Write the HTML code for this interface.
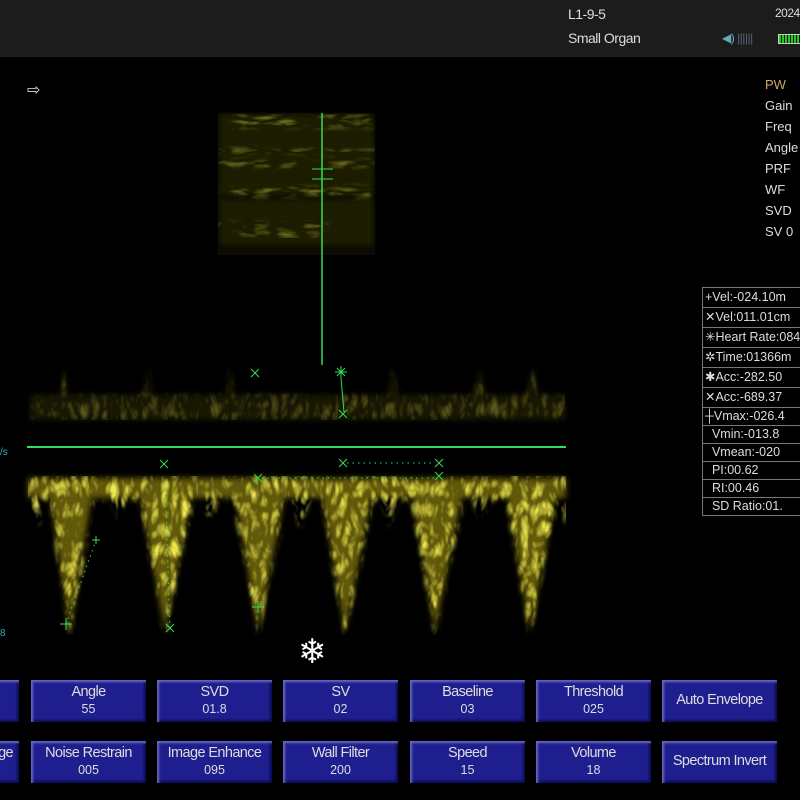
<!DOCTYPE html>
<html><head><meta charset="utf-8"><style>
body{margin:0;width:800px;height:800px;background:#000;overflow:hidden;position:relative;font-family:"Liberation Sans",sans-serif;}
.top{position:absolute;left:0;top:0;width:800px;height:57px;background:#1c1c1c;}
.t{position:absolute;color:#ddd;font-size:14px;white-space:nowrap;letter-spacing:-0.5px}
.r{position:absolute;left:765px;color:#ddd;font-size:13px;}
.mb{position:absolute;left:702px;width:110px;border:1px solid #777;color:#ddd;font-size:12.5px;}
.mb div{height:19px;line-height:19px;border-bottom:1px solid #777;padding-left:2px;white-space:nowrap;overflow:hidden;}
.mb div:last-child{border-bottom:none}
.b{position:absolute;width:115px;height:42px;background:#1e1e8e;box-shadow:inset 2px 2px 2px #6a6ac0,inset -2px -2px 2px #0c0c50;color:#ddd;text-align:center;font-size:14.5px;line-height:17px;box-sizing:border-box;padding-top:4px;letter-spacing:-0.6px;white-space:nowrap}
.b small{font-size:12.5px;display:block;letter-spacing:0}
.b.one{padding-top:12px}
</style></head><body>
<div class="top"></div>
<div class="t" style="left:568px;top:6px">L1-9-5</div>
<div class="t" style="left:568px;top:30px">Small Organ</div>
<div class="t" style="left:775px;top:6px;font-size:12px">2024</div>
<div class="t" style="left:722px;top:31px;color:#6ab;font-size:12px">◀) <span style="color:#567">||||||</span></div>
<div style="position:absolute;left:778px;top:34px;width:24px;height:8px;border:1px solid #ccc;background:repeating-linear-gradient(90deg,#2c2 0 2px,#111 2px 3px)"></div>
<div class="t" style="left:27px;top:80px;font-size:16px">⇨</div>
<div class="r" style="top:77px;color:#c9a86a">PW</div>
<div class="r" style="top:98px">Gain</div>
<div class="r" style="top:119px">Freq</div>
<div class="r" style="top:140px">Angle</div>
<div class="r" style="top:161px">PRF</div>
<div class="r" style="top:182px">WF</div>
<div class="r" style="top:203px">SVD</div>
<div class="r" style="top:224px">SV 0</div>
<div class="mb" style="top:287px">
<div>+Vel:-024.10m</div><div>✕Vel:011.01cm</div><div>✳Heart Rate:084</div><div>✲Time:01366m</div><div>✱Acc:-282.50</div><div>✕Acc:-689.37</div>
</div>
<div class="mb" style="top:407px">
<div style="height:17px;line-height:17px">┼Vmax:-026.4</div><div style="height:17px;line-height:17px">&nbsp;&nbsp;Vmin:-013.8</div><div style="height:17px;line-height:17px">&nbsp;&nbsp;Vmean:-020</div><div style="height:17px;line-height:17px">&nbsp;&nbsp;PI:00.62</div><div style="height:17px;line-height:17px">&nbsp;&nbsp;RI:00.46</div><div style="height:17px;line-height:17px">&nbsp;&nbsp;SD Ratio:01.</div>
</div>
<svg width="800" height="800" style="position:absolute;left:0;top:0">
<defs>
<filter id="bl"><feGaussianBlur stdDeviation="3"/></filter>
<filter id="tx" x="0" y="0" width="100%" height="100%"><feGaussianBlur in="SourceGraphic" stdDeviation="2.5" result="b"/><feTurbulence baseFrequency="0.1 0.05" numOctaves="2" seed="5" result="n"/><feColorMatrix in="n" values="0 0 0 0 0.85 0 0 0 0 0.8 0 0 0 0 0.08 2 0 0 0 -0.35" result="c"/><feComposite in="c" in2="b" operator="in"/></filter>
<filter id="tx2" x="0" y="0" width="100%" height="100%"><feGaussianBlur in="SourceGraphic" stdDeviation="2.5" result="b"/><feTurbulence baseFrequency="0.04 0.15" numOctaves="2" seed="2" result="n"/><feColorMatrix in="n" values="0 0 0 0 0.55 0 0 0 0 0.55 0 0 0 0 0.05 1.5 0 0 0 -0.3" result="c"/><feComposite in="c" in2="b" operator="in"/></filter>
</defs>
<rect x="218" y="113" width="157" height="142" fill="#0c0c02"/>
<g filter="url(#bl)" fill="#1e1e04"><rect x="220" y="115" width="153" height="80"/><rect x="220" y="200" width="153" height="45"/></g>
<g filter="url(#tx2)" fill="#fff" opacity="0.7">
<rect x="218" y="114" width="157" height="14"/><rect x="218" y="148" width="157" height="6"/><rect x="218" y="160" width="157" height="8"/><rect x="218" y="186" width="157" height="12"/><rect x="218" y="222" width="110" height="8"/><rect x="240" y="232" width="80" height="6"/></g>
<g filter="url(#bl)" opacity="0.2" fill="#7a7210">
<rect x="30" y="395" width="535" height="25"/>
<path d="M56 420 L64 368 L72 420Z M140 420 L148 368 L156 420Z M222 420 L230 368 L240 420Z M382 420 L393 368 L404 420Z M466 420 L480 368 L492 420Z M520 420 L532 368 L545 420Z"/></g>
<g filter="url(#tx)" fill="#fff" opacity="0.3">
<rect x="30" y="395" width="535" height="25"/>
<path d="M56 420 L64 368 L72 420Z M140 420 L148 368 L156 420Z M222 420 L230 368 L240 420Z M382 420 L393 368 L404 420Z M466 420 L480 368 L492 420Z M520 420 L532 368 L545 420Z"/></g>
<g filter="url(#bl)" fill="#7a7010" opacity="0.8">
<path d="M28 478 L566 478 L566 498 L28 498Z"/>
<path d="M50 495 L70 632 L92 495Z M140 495 L165 632 L192 495Z M235 495 L258 632 L285 495Z M322 495 L345 632 L372 495Z M412 495 L435 632 L462 495Z M507 495 L530 632 L556 495Z"/>
</g>
<g filter="url(#tx)" fill="#fff">
<path d="M28 476 L566 476 L566 500 L28 500Z"/>
<path d="M28 495 Q30 520 40 525 L40 495Z M548 495 L566 495 L566 525Z M200 495 L210 525 L220 495Z M110 495 L118 520 L130 495Z M290 495 L300 528 L312 495Z M380 495 L390 528 L400 495Z M470 495 L480 520 L495 495Z"/>
<path d="M48 495 L70 635 L95 495Z M138 495 L165 635 L195 495Z M232 495 L258 635 L288 495Z M320 495 L345 635 L375 495Z M410 495 L435 635 L465 495Z M505 495 L530 635 L558 495Z"/>
</g>
<line x1="27" y1="447" x2="566" y2="447" stroke="#33dd55" stroke-width="2"/>
<line x1="322" y1="113" x2="322" y2="365" stroke="#33dd55" stroke-width="1.5"/>
<line x1="312" y1="169" x2="333" y2="169" stroke="#33dd55"/><line x1="312" y1="179" x2="333" y2="179" stroke="#33dd55"/>
<g stroke="#33dd55" fill="none">
<path d="M251 369 l8 8 M259 369 l-8 8 M337 368 l8 8 M345 368 l-8 8 M341 366v12 M335 372h12 M341 378 L344 412 M339 410 l8 8 M347 410 l-8 8 M339 459 l8 8 M347 459 l-8 8 M435 459 l8 8 M443 459 l-8 8"/>
<path d="M347 463 L435 463 M262 478 L435 478 M66 624 L96 540 M170 628 L165 480" stroke-dasharray="1.5 4"/>
<path d="M60 624 h12 M66 618 v12 M92 540 h8 M96 536 v8 M166 624 l8 8 M174 624 l-8 8 M252 607 h12 M258 601 v12 M435 472 l8 8 M443 472 l-8 8 M254 474 l8 8 M262 474 l-8 8 M160 460 l8 8 M168 460 l-8 8"/>
</g>
<text x="0" y="455" fill="#3aa" font-size="10">/s</text>
<text x="0" y="636" fill="#3aa" font-size="10">8</text>
</svg>
<div style="position:absolute;left:298px;top:632px;color:#fff;font-size:34px;line-height:40px">❄</div>
<div class="b one" style="left:-96px;top:680px"></div>
<div class="b" style="left:31px;top:680px">Angle<small>55</small></div>
<div class="b" style="left:157px;top:680px">SVD<small>01.8</small></div>
<div class="b" style="left:283px;top:680px">SV<small>02</small></div>
<div class="b" style="left:410px;top:680px">Baseline<small>03</small></div>
<div class="b" style="left:536px;top:680px">Threshold<small>025</small></div>
<div class="b one" style="left:662px;top:680px">Auto Envelope</div>
<div class="b" style="left:-96px;top:741px;text-align:right;padding-right:6px">ge</div>
<div class="b" style="left:31px;top:741px">Noise Restrain<small>005</small></div>
<div class="b" style="left:157px;top:741px">Image Enhance<small>095</small></div>
<div class="b" style="left:283px;top:741px">Wall Filter<small>200</small></div>
<div class="b" style="left:410px;top:741px">Speed<small>15</small></div>
<div class="b" style="left:536px;top:741px">Volume<small>18</small></div>
<div class="b one" style="left:662px;top:741px">Spectrum Invert</div>
</body></html>
